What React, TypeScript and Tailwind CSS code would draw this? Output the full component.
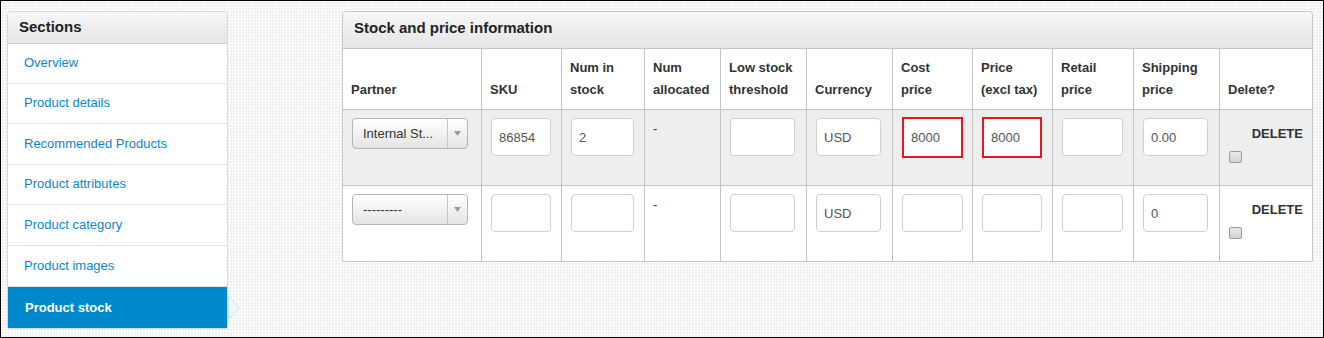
import React from "react";

const navItems: { label: string; h: string }[] = [
  { label: "Overview", h: "h-[40px]" },
  { label: "Product details", h: "h-[40px]" },
  { label: "Recommended Products", h: "h-[41px]" },
  { label: "Product attributes", h: "h-[40px]" },
  { label: "Product category", h: "h-[41px]" },
  { label: "Product images", h: "h-[41px]" },
];

const headers: React.ReactNode[] = [
  "Partner",
  "SKU",
  <>Num in<br />stock</>,
  <>Num<br />allocated</>,
  <>Low stock<br />threshold</>,
  "Currency",
  <>Cost<br />price</>,
  <>Price<br />(excl tax)</>,
  <>Retail<br />price</>,
  <>Shipping<br />price</>,
  "Delete?",
];

function Select({ text }: { text: string }) {
  return (
    <div className="flex w-[116px] h-[31px] rounded-[4px] border border-[#b5b5b5] bg-linear-to-b from-white to-[#e4e4e4] overflow-hidden">
      <div className="flex-1 flex items-center pl-[10px] text-[13px] text-[#333] whitespace-nowrap">{text}</div>
      <div className="w-[20px] border-l border-[#c6c6c6] flex items-center justify-center">
        <svg width="7" height="5" viewBox="0 0 7 5">
          <polygon points="0,0 7,0 3.5,5" fill="#9a9a9a" />
        </svg>
      </div>
    </div>
  );
}

function Input({ w, value, red }: { w: string; value?: string; red?: boolean }) {
  if (red) {
    return (
      <input
        readOnly
        value={value ?? ""}
        className={`${w} h-[41px] -mt-[1px] border-2 border-[#e8151b] bg-white pl-[7px] text-[13px] text-[#555] outline-none font-['Liberation_Sans',Arial,sans-serif]`}
      />
    );
  }
  return (
    <input
      readOnly
      value={value ?? ""}
      className={`${w} h-[38px] rounded-[4px] border border-[#cfcfcf] bg-white pl-[7px] text-[13px] text-[#555] outline-none font-['Liberation_Sans',Arial,sans-serif]`}
    />
  );
}

function Cell({ children, last }: { children?: React.ReactNode; last?: boolean }) {
  return (
    <div className={`pt-2 pl-[9px] ${last ? "" : "border-r border-[#c4c4c4]"}`}>{children}</div>
  );
}

function DeleteCell() {
  return (
    <div className="pl-[9px] pr-[9px] pt-[13px] flex flex-col">
      <div className="self-end font-bold leading-[22px] text-[13px] text-[#333]">DELETE</div>
      <div className="mt-[6px] w-[13px] h-[12px] rounded-[2px] border border-[#9c9c9c] bg-linear-to-b from-[#e8e8e8] to-[#d2d2d2]" />
    </div>
  );
}

function Row({
  bg,
  border,
  select,
  sku,
  stock,
  currency,
  cost,
  price,
  shipping,
  red,
}: {
  bg: string;
  border: boolean;
  select: string;
  sku?: string;
  stock?: string;
  currency: string;
  cost?: string;
  price?: string;
  shipping: string;
  red?: boolean;
}) {
  return (
    <div
      className={`grid grid-cols-[139px_80px_83px_76px_86px_86px_80px_80px_81px_86px_92px] ${bg} ${
        border ? "h-[76px] border-b border-[#c4c4c4]" : "h-[75px]"
      }`}
    >
      <Cell>
        <Select text={select} />
      </Cell>
      <Cell>
        <Input w="w-[60px]" value={sku} />
      </Cell>
      <Cell>
        <Input w="w-[63px]" value={stock} />
      </Cell>
      <div className="border-r border-[#c4c4c4] pt-2 pl-2 leading-[22px] text-[13px] text-[#333]">-</div>
      <Cell>
        <Input w="w-[65px]" />
      </Cell>
      <Cell>
        <Input w="w-[65px]" value={currency} />
      </Cell>
      <Cell>
        <Input w="w-[61px]" value={cost} red={red} />
      </Cell>
      <Cell>
        <Input w="w-[60px]" value={price} red={red} />
      </Cell>
      <Cell>
        <Input w="w-[61px]" />
      </Cell>
      <Cell>
        <Input w="w-[65px]" value={shipping} />
      </Cell>
      <DeleteCell />
    </div>
  );
}

export default function App() {
  return (
    <div className="w-[1324px] h-[338px] border border-black overflow-hidden font-['Liberation_Sans',Arial,sans-serif] text-[13px] text-[#333] bg-[#efefef] [background-image:linear-gradient(90deg,#fcfcfc_1px,transparent_1px),linear-gradient(#fcfcfc_1px,transparent_1px)] [background-size:3px_3px]">
      <div className="flex items-start pl-[6px] pt-[10px]">
        {/* Sidebar */}
        <div className="relative w-[221px] rounded-t-[4px] border border-[#dadada] bg-white">
          <div className="h-[32px] flex items-center pl-[11px] pb-[1px] border-b border-[#d0d0d0] rounded-t-[4px] bg-linear-to-b from-[#f7f7f7] to-[#e5e5e5] text-[15px] font-bold text-[#222]">
            Sections
          </div>
          {navItems.map((it) => (
            <div
              key={it.label}
              className={`${it.h} flex items-center pl-[16px] pb-[1px] border-b border-[#e3e3e3] text-[13px] text-[#0a88cf]`}
            >
              {it.label}
            </div>
          ))}
          <div className="relative h-[41px] flex items-center pl-[17px] bg-[#0088cc] text-[13px] font-bold text-white">
            Product stock
            <svg
              className="absolute right-[-13px] top-[9px]"
              width="12"
              height="24"
              viewBox="0 0 12 24"
            >
              <polygon points="0.5,0.5 11,12 0.5,23.5" fill="#f1f7fb" stroke="#c9dfee" strokeWidth="1" />
            </svg>
          </div>
        </div>

        {/* Main panel */}
        <div className="ml-[114px] w-[971px] rounded-t-[4px] border border-[#c8c8c8] bg-white">
          <div className="h-[37px] flex items-center pl-[11px] pb-[3px] border-b border-[#c4c4c4] rounded-t-[4px] bg-linear-to-b from-[#f7f7f7] to-[#e5e5e5] text-[15px] font-bold text-[#222]">
            Stock and price information
          </div>
          <div className="grid grid-cols-[139px_80px_83px_76px_86px_86px_80px_80px_81px_86px_92px] h-[61px] border-b border-[#c4c4c4]">
            {headers.map((h, i) => (
              <div
                key={i}
                className={`flex flex-col justify-end pl-2 pb-2 leading-[22px] text-[13px] font-bold text-[#333] ${
                  i < headers.length - 1 ? "border-r border-[#c4c4c4]" : ""
                }`}
              >
                <div>{h}</div>
              </div>
            ))}
          </div>
          <Row
            bg="bg-[#eeeeee]"
            border
            select="Internal St..."
            sku="86854"
            stock="2"
            currency="USD"
            cost="8000"
            price="8000"
            shipping="0.00"
            red
          />
          <Row bg="bg-white" border={false} select="---------" currency="USD" shipping="0" />
        </div>
      </div>
    </div>
  );
}
